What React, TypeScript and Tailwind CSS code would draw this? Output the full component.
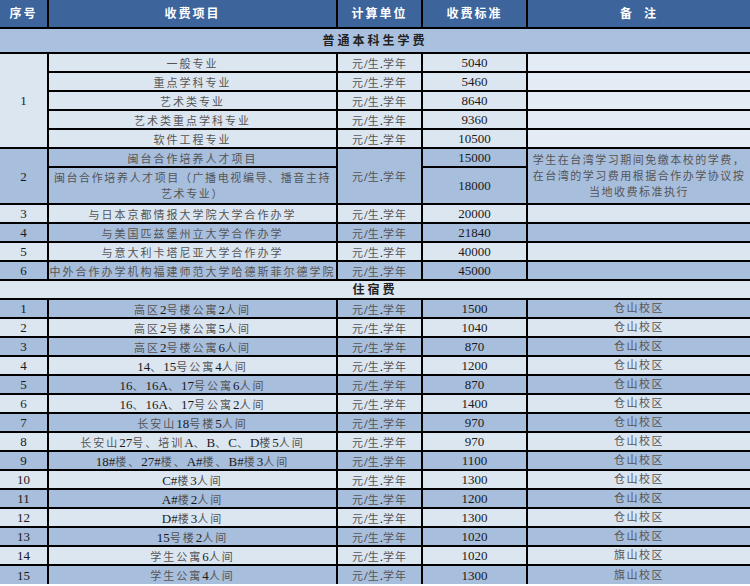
import React from "react";

const FONT = '"Liberation Serif", "Noto Sans CJK SC", serif';

function Txt({ s, cjkCls = "text-[#555] text-[11px] tracking-[2px]" }: { s: string; cjkCls?: string }) {
  const parts = s.match(/[\x00-\x7F]+|[^\x00-\x7F]+/g) || [];
  return (
    <>
      {parts.map((p, i) =>
        /^[\x00-\x7F]+$/.test(p) ? (
          <span key={i} className="text-[#1a1a1a] text-[13px] tracking-normal">
            {p}
          </span>
        ) : (
          <span key={i} className={cjkCls}>
            {p}
          </span>
        )
      )}
    </>
  );
}

const base = "border-2 border-black text-center align-middle p-0";
const cell = `${base} leading-none whitespace-nowrap`;
const LIGHT = "bg-[#dce6f1]";
const DARK = "bg-[#a8bedd]";
const NUM = "text-[13px] text-[#1a1a1a]";

const unit = "元/生.学年";

const sec1a = [
  ["一般专业", "5040"],
  ["重点学科专业", "5460"],
  ["艺术类专业", "8640"],
  ["艺术类重点学科专业", "9360"],
  ["软件工程专业", "10500"],
];

const sec1b: [string, string, string][] = [
  ["3", "与日本京都情报大学院大学合作办学", "20000"],
  ["4", "与美国匹兹堡州立大学合作办学", "21840"],
  ["5", "与意大利卡塔尼亚大学合作办学", "40000"],
  ["6", "中外合作办学机构福建师范大学哈德斯菲尔德学院", "45000"],
];

const housing: [string, string, string][] = [
  ["高区2号楼公寓2人间", "1500", "仓山校区"],
  ["高区2号楼公寓5人间", "1040", "仓山校区"],
  ["高区2号楼公寓6人间", "870", "仓山校区"],
  ["14、15号公寓4人间", "1200", "仓山校区"],
  ["16、16A、17号公寓6人间", "870", "仓山校区"],
  ["16、16A、17号公寓2人间", "1400", "仓山校区"],
  ["长安山18号楼5人间", "970", "仓山校区"],
  ["长安山27号、培训A、B、C、D楼5人间", "970", "仓山校区"],
  ["18#楼、27#楼、A#楼、B#楼3人间", "1100", "仓山校区"],
  ["C#楼3人间", "1300", "仓山校区"],
  ["A#楼2人间", "1200", "仓山校区"],
  ["D#楼3人间", "1300", "仓山校区"],
  ["15号楼2人间", "1020", "仓山校区"],
  ["学生公寓6人间", "1020", "旗山校区"],
  ["学生公寓4人间", "1300", "旗山校区"],
];

const UnitTxt = () => <Txt s={unit} cjkCls="text-[#555] text-[11px] tracking-[1px]" />;

export default function App() {
  return (
    <div className="w-[750px] h-[586px] overflow-hidden bg-white" style={{ fontFamily: FONT }}>
      <table className="table-fixed border-collapse border-hidden w-[750px]">
        <colgroup>
          <col className="w-[48px]" />
          <col className="w-[289px]" />
          <col className="w-[85px]" />
          <col className="w-[105px]" />
          <col className="w-[223px]" />
        </colgroup>
        <tbody>
          <tr className="h-[28px] bg-[#3d659c] text-white font-bold text-[12px] tracking-[2px]">
            <td className={cell}>序号</td>
            <td className={cell}>收费项目</td>
            <td className={cell}>计算单位</td>
            <td className={cell}>收费标准</td>
            <td className={cell}>备&nbsp;&nbsp;注</td>
          </tr>
          <tr className="h-[25px] bg-[#a9c0df]">
            <td colSpan={5} className={`${cell} font-bold text-[12px] tracking-[3px] text-[#222]`}>
              普通本科生学费
            </td>
          </tr>
          {sec1a.map(([name, fee], i) => (
            <tr key={name} className={`h-[19px] ${LIGHT}`}>
              {i === 0 && (
                <td rowSpan={5} className={`${cell} ${NUM}`}>
                  1
                </td>
              )}
              <td className={cell}>
                <Txt s={name} />
              </td>
              <td className={cell}>
                <UnitTxt />
              </td>
              <td className={`${cell} ${NUM}`}>{fee}</td>
              <td className={`${cell} bg-[#e3ebf5]`}></td>
            </tr>
          ))}
          <tr className={`h-[19px] ${DARK}`}>
            <td rowSpan={2} className={`${cell} ${NUM}`}>
              2
            </td>
            <td className={cell}>
              <Txt s="闽台合作培养人才项目" />
            </td>
            <td rowSpan={2} className={cell}>
              <UnitTxt />
            </td>
            <td className={`${cell} ${NUM}`}>15000</td>
            <td rowSpan={2} className={`${base} whitespace-nowrap leading-[16px] text-[#555] text-[11px] tracking-[1.5px]`}>
              学生在台湾学习期间免缴本校的学费，
              <br />
              在台湾的学习费用根据合作办学协议按
              <br />
              当地收费标准执行
            </td>
          </tr>
          <tr className={`h-[37px] ${DARK}`}>
            <td className={`${base} whitespace-nowrap leading-[16px] text-[#555] text-[11px] tracking-[1.6px]`}>
              闽台合作培养人才项目（广播电视编导、播音主持
              <br />
              艺术专业）
            </td>
            <td className={`${cell} ${NUM}`}>18000</td>
          </tr>
          {sec1b.map(([no, name, fee], i) => (
            <tr key={no} className={`h-[19px] ${i % 2 === 0 ? LIGHT : DARK}`}>
              <td className={`${cell} ${NUM}`}>{no}</td>
              <td className={cell}>
                <Txt s={name} />
              </td>
              <td className={cell}>
                <UnitTxt />
              </td>
              <td className={`${cell} ${NUM}`}>{fee}</td>
              <td className={cell}></td>
            </tr>
          ))}
          <tr className="h-[19px] bg-[#dde7f2]">
            <td colSpan={5} className={`${cell} font-bold text-[12px] tracking-[3px] text-[#222]`}>
              住宿费
            </td>
          </tr>
          {housing.map(([name, fee, note], i) => (
            <tr key={i} className={`h-[19px] ${i % 2 === 0 ? DARK : LIGHT}`}>
              <td className={`${cell} ${NUM}`}>{i + 1}</td>
              <td className={cell}>
                <Txt s={name} />
              </td>
              <td className={cell}>
                <UnitTxt />
              </td>
              <td className={`${cell} ${NUM}`}>{fee}</td>
              <td className={`${cell} text-[#555] text-[11px] tracking-[1.5px]`}>{note}</td>
            </tr>
          ))}
        </tbody>
      </table>
    </div>
  );
}
